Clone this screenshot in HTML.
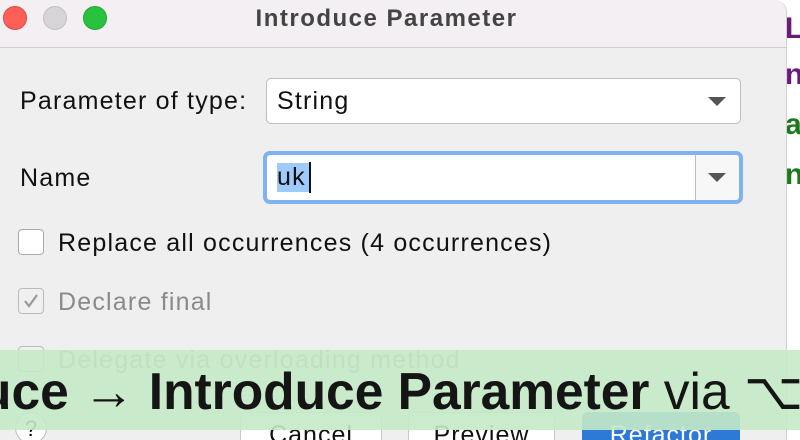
<!DOCTYPE html>
<html><head><style>
*{margin:0;padding:0;box-sizing:border-box}
body{width:800px;height:440px;overflow:hidden;background:#fff;font-family:"Liberation Sans",sans-serif;position:relative}
.dlg{position:absolute;left:0;top:0;width:787px;height:440px;background:#efefef;border-top-right-radius:12px;overflow:hidden;border-right:1px solid #d0d0d0}
.title{position:absolute;left:0;top:0;width:787px;height:48px;background:#f3eff3;border-bottom:1px solid #cfcfcf}
.tl{position:absolute;top:6px;width:24px;height:24px;border-radius:50%}
.t{position:absolute;font-size:25px;letter-spacing:1.2px;color:#111;white-space:nowrap}
.box{position:absolute;background:#fff;border:1px solid #bdbdbd;border-radius:5px}
.arrow{position:absolute;width:0;height:0;border-left:9px solid transparent;border-right:9px solid transparent;border-top:9px solid #555}
.cb{position:absolute;width:26px;height:26px;border:1px solid #aaa;border-radius:4px;background:#fff}
.side{position:absolute;left:785px;font-size:30px;font-weight:bold;font-family:"Liberation Sans",sans-serif}
.btn{position:absolute;top:412px;height:40px;background:#fff;border:1px solid #c8c8c8;border-radius:6px;font-size:25px;letter-spacing:1px;text-align:center;padding-top:8px;color:#111}
</style></head><body>
<div style="position:absolute;left:0;top:0;width:800px;height:440px;overflow:hidden">
<div class="side" style="top:12px;color:#6a1a7a">La</div>
<div class="side" style="top:58px;color:#6a1a7a">nv</div>
<div class="side" style="top:108px;color:#1a7a1a">ar</div>
<div class="side" style="top:158px;color:#1a7a1a">n</div>
<div class="dlg">
 <div class="title">
  <div class="tl" style="left:3px;background:#fe5f57;border:1px solid #e2463f"></div>
  <div class="tl" style="left:43px;background:#d6d4d6;border:1px solid #c2c0c2"></div>
  <div class="tl" style="left:83px;background:#29c23f;border:1px solid #1ea932"></div>
  <div class="t" style="left:0;width:773px;text-align:center;top:5px;font-weight:bold;color:#444;font-size:24px;letter-spacing:1.5px">Introduce Parameter</div>
 </div>
 <div class="t" style="left:20px;top:87px">Parameter of type:</div>
 <div class="box" style="left:266px;top:78px;width:475px;height:46px"></div>
 <div class="t" style="left:277px;top:87px">String</div>
 <div class="arrow" style="left:708px;top:97px"></div>
 <div class="t" style="left:20px;top:164px">Name</div>
 <div style="position:absolute;left:263px;top:151px;width:480px;height:53px;border:4px solid #7fb2ee;border-radius:7px;background:#fff"></div>
 <div style="position:absolute;left:695px;top:155px;width:44px;height:45px;border-left:1px solid #bbb;background:#f7f7f7;border-radius:0 4px 4px 0"></div>
 <div class="arrow" style="left:708px;top:173px"></div>
 <div style="position:absolute;left:277px;top:163px;width:32px;height:29px;background:#9ecbfb"></div>
 <div class="t" style="left:277px;top:163px">uk</div>
 <div style="position:absolute;left:309px;top:162px;width:2px;height:31px;background:#111"></div>
 <div class="cb" style="left:18px;top:229px"></div>
 <div class="t" style="left:58px;top:229px">Replace all occurrences (4 occurrences)</div>
 <div class="cb" style="left:18px;top:288px;background:#f0f0f0;border-color:#bbb"></div>
 <svg style="position:absolute;left:18px;top:288px" width="26" height="26"><path d="M7 13 L11 18 L19 7" fill="none" stroke="#999" stroke-width="2.2"/></svg>
 <div class="t" style="left:58px;top:288px;color:#8a8a8a">Declare final</div>
 <div class="cb" style="left:18px;top:346px;background:#f0f0f0;border-color:#bbb"></div>
 <div class="t" style="left:58px;top:346px;color:#8a8a8a">Delegate via overloading method</div>
 <div style="position:absolute;left:15px;top:412px;width:32px;height:32px;border:1px solid #bbb;border-radius:50%;background:#fff;font-size:22px;text-align:center;padding-top:3px">?</div>
 <div class="btn" style="left:240px;width:142px">Cancel</div>
 <div class="btn" style="left:408px;width:147px">Preview</div>
 <div class="btn" style="left:582px;width:158px;background:#2d7ad6;border-color:#2d7ad6;color:#fff">Refactor</div>
</div>
<div style="position:absolute;left:0;top:350px;width:800px;height:80px;background:rgba(196,234,198,0.9)"></div>
<div style="position:absolute;left:-20px;top:360px;white-space:nowrap;font-size:52px;color:#151515;transform:scaleX(0.99);transform-origin:0 0;line-height:64px"><b>uce → Introduce Parameter</b> via ⌥⌘P</div>
</div>
</body></html>
